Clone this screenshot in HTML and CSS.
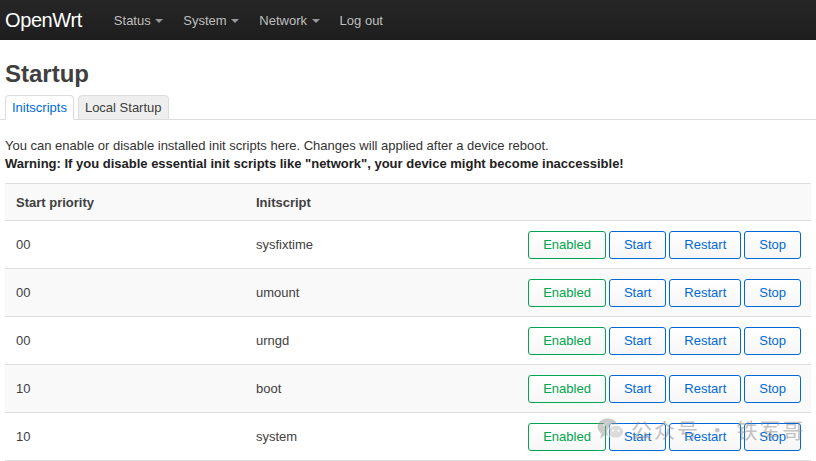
FILE: index.html
```html
<!DOCTYPE html>
<html lang="en">
<head>
    <meta charset="UTF-8">
    <title>Startup - OpenWrt</title>
    <link rel="stylesheet" href="styles.css">
</head>
<body>
    <header class="topbar">
        <a class="brand" href="#">OpenWrt</a>
        <ul class="nav">
            <li><a href="#">Status <span class="caret"></span></a></li>
            <li><a href="#">System <span class="caret"></span></a></li>
            <li><a href="#">Network <span class="caret"></span></a></li>
            <li><a href="#">Log out</a></li>
        </ul>
    </header>

    <div class="main">
        <h2 class="title">Startup</h2>
        <ul class="tabs">
            <li class="tab active"><a href="#">Initscripts</a></li>
            <li class="tab"><a href="#">Local Startup</a></li>
        </ul>

        <div class="desc">
            You can enable or disable installed init scripts here. Changes will applied after a device reboot.<br>
            <strong>Warning: If you disable essential init scripts like "network", your device might become inaccessible!</strong>
        </div>

        <table class="table">
            <tr class="head">
                <th class="prio">Start priority</th>
                <th>Initscript</th>
                <th class="actions"></th>
            </tr>
            <tr>
                <td>00</td>
                <td>sysfixtime</td>
                <td class="actions">
                    <button class="btn green">Enabled</button><button class="btn">Start</button><button class="btn">Restart</button><button class="btn">Stop</button>
                </td>
            </tr>
            <tr class="alt">
                <td>00</td>
                <td>umount</td>
                <td class="actions">
                    <button class="btn green">Enabled</button><button class="btn">Start</button><button class="btn">Restart</button><button class="btn">Stop</button>
                </td>
            </tr>
            <tr>
                <td>00</td>
                <td>urngd</td>
                <td class="actions">
                    <button class="btn green">Enabled</button><button class="btn">Start</button><button class="btn">Restart</button><button class="btn">Stop</button>
                </td>
            </tr>
            <tr class="alt">
                <td>10</td>
                <td>boot</td>
                <td class="actions">
                    <button class="btn green">Enabled</button><button class="btn">Start</button><button class="btn">Restart</button><button class="btn">Stop</button>
                </td>
            </tr>
            <tr>
                <td>10</td>
                <td>system</td>
                <td class="actions">
                    <button class="btn green">Enabled</button><button class="btn">Start</button><button class="btn">Restart</button><button class="btn">Stop</button>
                </td>
            </tr>
        </table>
    </div>

    <div class="watermark">
        <svg width="28" height="24" viewBox="0 0 26 22">
            <ellipse cx="10" cy="9" rx="9.5" ry="8" fill="#999"/>
            <path d="M4 15 L3 20 L8 16 Z" fill="#999"/>
            <ellipse cx="17.5" cy="13.5" rx="7.5" ry="6.2" fill="#bbb" stroke="#fff" stroke-width="1.2"/>
            <circle cx="7" cy="7" r="1.2" fill="#fff"/>
            <circle cx="13" cy="7" r="1.2" fill="#fff"/>
            <circle cx="15" cy="12.5" r="1" fill="#fff"/>
            <circle cx="20" cy="12.5" r="1" fill="#fff"/>
        </svg>
        <span>公众号 · 铁军哥</span>
    </div>
</body>
</html>
```

FILE: styles.css
```css
body{
    margin: 0;
    font-family: "Liberation Sans", Arial, sans-serif;
    font-size: 13px;
    color: #404040;
    background: #fff;
}
a{
    text-decoration: none;
}
.topbar{
    height: 40px;
    display: flex;
    align-items: center;
    background: linear-gradient(#262626, #1e1e1e);
}
.brand{
    color: #fff;
    font-size: 20px;
    padding: 0 22px 0 5px;
    letter-spacing: -0.4px;
}
.nav{
    display: flex;
    list-style: none;
    margin: 0;
    padding: 0;
}
.nav a{
    display: block;
    color: #bfbfbf;
    font-size: 13px;
    padding: 0 10px;
}
.caret{
    display: inline-block;
    width: 0;
    height: 0;
    margin-left: 1px;
    vertical-align: middle;
    border-top: 4px solid #999;
    border-left: 4px solid transparent;
    border-right: 4px solid transparent;
}
.main{
    padding: 0 5px;
}
.title{
    margin: 0;
    padding: 20px 0 8px;
    font-size: 24px;
    line-height: 27px;
    color: #404040;
}
.tabs{
    display: flex;
    list-style: none;
    margin: 0 -5px;
    padding: 0 5px;
    border-bottom: 1px solid #ddd;
}
.tab{
    margin-right: 4px;
    margin-bottom: -1px;
}
.tab a{
    display: block;
    padding: 0 6px;
    line-height: 23px;
    font-size: 13px;
    color: #404040;
    background: #eee;
    border: 1px solid #ddd;
    border-radius: 4px 4px 0 0;
}
.tab.active a{
    color: #0069d6;
    background: #fff;
    border-bottom-color: #fff;
}
.desc{
    margin-top: 17px;
    font-size: 13px;
    line-height: 18px;
    color: #333;
}
.desc strong{
    color: #222;
}
.table{
    width: 100%;
    margin-top: 10px;
    border-collapse: collapse;
    border-spacing: 0;
}
.table th, .table td{
    text-align: left;
    border-top: 1px solid #ddd;
    padding: 0 11px;
    font-size: 13px;
}
.table th{
    height: 36px;
    color: #404040;
}
.table td{
    height: 47px;
    color: #404040;
}
.table tr:last-child td{
    border-bottom: 1px solid #ddd;
}
.head, .alt{
    background: #f9f9f9;
}
.prio{
    width: 218px;
}
.table .actions{
    width: 1%;
    text-align: right;
    white-space: nowrap;
    padding-right: 10px;
}
.btn{
    font-family: "Liberation Sans", Arial, sans-serif;
    font-size: 13px;
    height: 28px;
    padding: 0 14px;
    margin-left: 3px;
    color: #0069d6;
    background: linear-gradient(#fff, #f6f6f6);
    border: 1px solid #0069d6;
    border-radius: 3px;
    cursor: pointer;
}
.btn.green{
    color: #00a64f;
    border-color: #00a64f;
}
.watermark{
    position: absolute;
    left: 597px;
    top: 414px;
    display: flex;
    align-items: center;
    gap: 6px;
    white-space: nowrap;
    opacity: 0.5;
    pointer-events: none;
}
.watermark span{
    font-family: "Noto Sans CJK SC", sans-serif;
    font-size: 21px;
    color: #888;
    letter-spacing: 2px;
}
```
